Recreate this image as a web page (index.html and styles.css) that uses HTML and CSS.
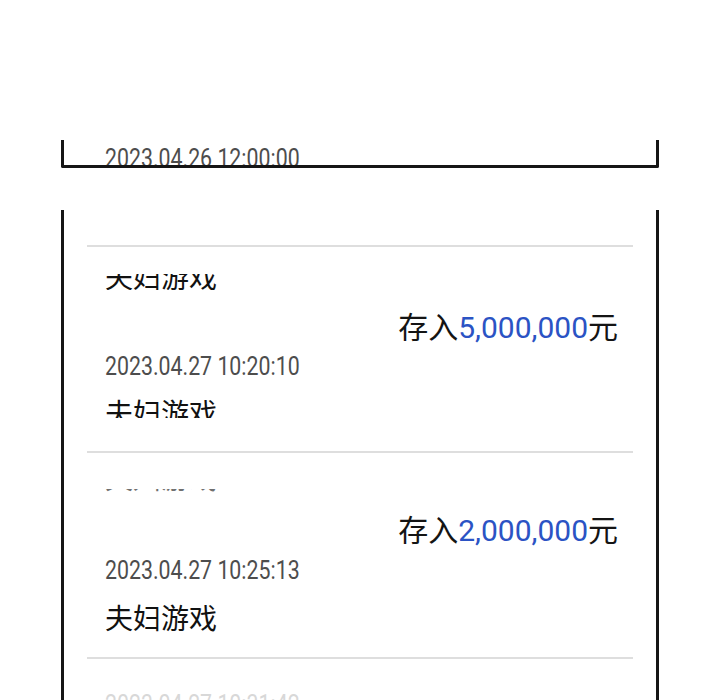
FILE: index.html
```html
<!DOCTYPE html>
<html lang="zh">
<head>
<meta charset="utf-8">
<title>交易记录</title>
<link rel="stylesheet" href="styles.css">
</head>
<body>
<div class="page">
  <div class="panel-top">
    <div class="date date-top">2023.04.26 12:00:00</div>
  </div>
  <div class="panel-gap"></div>
  <div class="panel-main">
    <div class="item item-1">
      <div class="clip clip-a"><div class="name shift-a">夫妇游戏</div></div>
      <div class="amount amount-1">存入<span class="num">5,000,000</span>元</div>
      <div class="date date-1">2023.04.27 10:20:10</div>
      <div class="clip clip-b"><div class="name">夫妇游戏</div></div>
    </div>
    <div class="item item-2">
      <div class="clip clip-c"><div class="name shift-c">夫妇游戏</div></div>
      <div class="amount amount-2">存入<span class="num">2,000,000</span>元</div>
      <div class="date date-2">2023.04.27 10:25:13</div>
      <div class="name name-2">夫妇游戏</div>
    </div>
    <div class="item item-3">
      <div class="date date-3">2023.04.27 10:31:42</div>
    </div>
  </div>
</div>
</body>
</html>
```

FILE: styles.css
```css
html, body {
  margin: 0;
  padding: 0;
  background: #ffffff;
}

.page {
  padding-top: 140px;
  height: 560px;
  overflow: hidden;
}

.panel-top {
  margin-left: 61px;
  width: 598px;
  height: 28px;
  box-sizing: border-box;
  border: 3px solid #151515;
  border-top: none;
  border-radius: 0 0 2px 2px;
  overflow: hidden;
  padding-left: 41px;
}

.panel-gap {
  height: 42px;
}

.panel-main {
  margin-left: 61px;
  width: 598px;
  box-sizing: border-box;
  border-left: 3px solid #151515;
  border-right: 3px solid #151515;
  height: 490px;
  padding: 35px 23px 0;
  overflow: hidden;
}

.item {
  border-top: 2px solid #dedede;
  padding: 0 15px 0 18px;
  box-sizing: border-box;
  height: 206px;
}

.item-3 {
  height: 60px;
}

.name {
  font-family: "Noto Sans CJK SC", "Noto Sans", sans-serif;
  font-size: 28px;
  line-height: 32px;
  color: #111111;
  white-space: nowrap;
}

.date {
  font-family: "Roboto", "Noto Sans", sans-serif;
  font-size: 26px;
  line-height: 30px;
  color: #4d4d4d;
  white-space: nowrap;
  transform: scaleX(0.82);
  transform-origin: left center;
}

.amount {
  font-family: "Roboto", "Noto Sans CJK SC", sans-serif;
  font-size: 30px;
  line-height: 44px;
  color: #141414;
  text-align: right;
  white-space: nowrap;
}

.amount .num {
  color: #2b53c4;
}

.clip {
  overflow: hidden;
}

/* item 1 */
.clip-a {
  margin-top: 27px;
  height: 16px;
}
.shift-a {
  margin-top: -14px;
}
.amount-1 {
  margin-top: 16px;
}
.date-1 {
  margin-top: 1px;
}
.clip-b {
  margin-top: 15px;
  height: 22px;
}

/* item 2 */
.clip-c {
  margin-top: 36px;
  height: 3px;
}
.shift-c {
  margin-top: -28px;
  opacity: 0.6;
}
.amount-2 {
  margin-top: 17px;
}
.date-2 {
  margin-top: 2px;
}
.name-2 {
  margin-top: 16px;
}

/* item 3 */
.date-3 {
  margin-top: 30px;
  color: #d8d8d8;
}

.date-top {
  margin-top: 3px;
  color: #4d4d4d;
}
```
